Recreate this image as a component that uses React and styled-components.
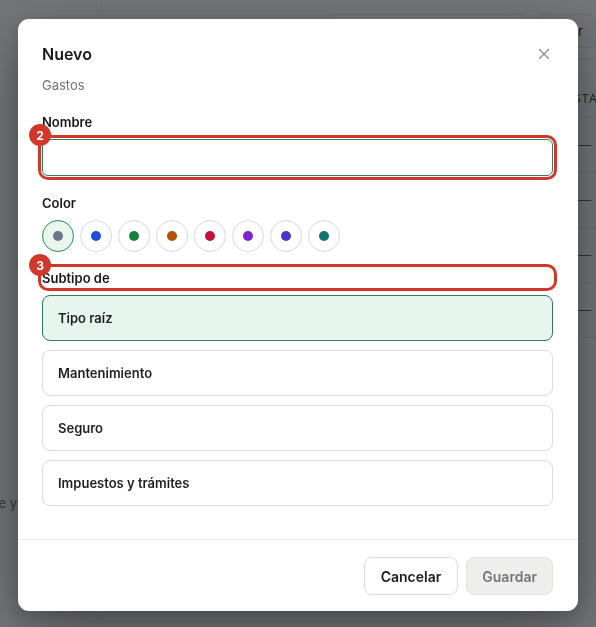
import React from 'react'
import styled, { createGlobalStyle } from 'styled-components'

const GlobalStyle = createGlobalStyle`
  html, body {
    margin: 0;
    padding: 0;
    height: 100%;
    overflow: hidden;
  }
  body {
    font-family: Inter, "Noto Sans", "Liberation Sans", sans-serif;
    background: #f7f8fa;
    color: #1b1d21;
  }
`

const swatches = ['#6b7588', '#1d4ed8', '#15803d', '#b45309', '#be123c', '#7e22ce', '#4338ca', '#0f766e']
const subtypes = ['Tipo raíz', 'Mantenimiento', 'Seguro', 'Impuestos y trámites']

export default function App() {
  return (
    <>
      <GlobalStyle />
      <Page>
        <Sidebar>
          <SideNote>
            <span>Fecha de pago, importe y</span>
          </SideNote>
        </Sidebar>
        <Main>
          <TopBar>
            <PageTitle>Tipos</PageTitle>
            <Search />
            <GhostButton>Crear</GhostButton>
          </TopBar>
          <Table>
            <HeadRow>
              <Cell />
              <HeadCell>Estado</HeadCell>
            </HeadRow>
            {[0, 1, 2, 3].map((i) => (
              <Row key={i}>
                <Cell />
                <DashCell>—</DashCell>
              </Row>
            ))}
          </Table>
        </Main>
      </Page>

      <Overlay />
      <Dialog>
        <Header>
          <Title>Nuevo</Title>
          <Close aria-label="Cerrar">
            <svg width="12" height="12" viewBox="0 0 12 12" fill="none">
              <path d="M1.5 1.5l9 9M10.5 1.5l-9 9" stroke="#8a8d92" strokeWidth="1.4" strokeLinecap="round" />
            </svg>
          </Close>
        </Header>
        <Subtitle>Gastos</Subtitle>

        <Body>
          <Field>
            <Label>Nombre</Label>
            <Marked>
              <Badge>2</Badge>
              <Input />
            </Marked>
          </Field>

          <Field>
            <Label>Color</Label>
            <Swatches>
              {swatches.map((c, i) => (
                <Swatch key={c} $selected={i === 0}>
                  <Dot style={{ background: c }} />
                </Swatch>
              ))}
            </Swatches>
          </Field>

          <Field $tight>
            <Marked>
              <Badge $top={-14}>3</Badge>
              <Label $boxed>Subtipo de</Label>
            </Marked>
            <Options>
              {subtypes.map((s, i) => (
                <Option key={s} $active={i === 0}>{s}</Option>
              ))}
            </Options>
          </Field>
        </Body>

        <Footer>
          <Button>Cancelar</Button>
          <Button $disabled>Guardar</Button>
        </Footer>
      </Dialog>
    </>
  )
}

/* page underneath the dialog */

const Page = styled.div`
  display: flex;
  height: 100vh;
`

const Sidebar = styled.aside`
  width: 102px;
  flex-shrink: 0;
  border-right: 1px solid #e2e4e8;
  display: flex;
  flex-direction: column;
  justify-content: flex-end;
  padding-bottom: 116px;
  box-sizing: border-box;
`

const SideNote = styled.div`
  width: 17px;
  display: flex;
  justify-content: flex-end;
  overflow: hidden;
  white-space: nowrap;
  font-size: 13px;
  color: #6f737a;
`

const Main = styled.main`
  flex: 1;
  display: flex;
  flex-direction: column;
  padding-left: 30px;
  min-width: 0;
`

const TopBar = styled.div`
  display: flex;
  align-items: flex-start;
  height: 60px;
  padding-top: 14px;
  box-sizing: border-box;
  border-bottom: 1px solid #e4e6ea;
`

const PageTitle = styled.h1`
  margin: 2px 0 0;
  font-size: 18px;
  font-weight: 600;
  flex: 1;
`

const Search = styled.div`
  width: 196px;
  height: 32px;
  border: 1px solid #dcdfe4;
  border-radius: 8px;
  background: #fff;
`

const GhostButton = styled.div`
  margin-left: 10px;
  height: 32px;
  padding: 0 12px;
  display: flex;
  align-items: center;
  border: 1px solid #dcdfe4;
  border-radius: 8px;
  font-size: 13px;
  background: #f2f3f5;
  white-space: nowrap;
`

const Table = styled.div`
  display: flex;
  flex-direction: column;
  margin-top: 20px;
`

const HeadRow = styled.div`
  display: flex;
  align-items: center;
  height: 37px;
  border-bottom: 1px solid #e1e3e7;
`

const Row = styled.div`
  display: flex;
  align-items: center;
  height: 54px;
  border-bottom: 1px solid #e1e3e7;
`

const Cell = styled.div`
  width: 433px;
  flex-shrink: 0;
`

const HeadCell = styled.div`
  font-size: 12px;
  letter-spacing: 0.06em;
  text-transform: uppercase;
  color: #3b3f46;
  white-space: nowrap;
`

const DashCell = styled.div`
  padding-left: 13px;
  font-size: 13px;
  color: #5b6068;
`

/* modal */

const Overlay = styled.div`
  position: fixed;
  inset: 0;
  background: rgba(16, 19, 23, 0.57);
`

const Dialog = styled.div`
  position: fixed;
  left: 18px;
  top: 19px;
  width: 560px;
  background: #fff;
  border-radius: 11px;
  box-shadow: 0 20px 60px rgba(0, 0, 0, 0.35), 0 4px 14px rgba(0, 0, 0, 0.15);
  display: flex;
  flex-direction: column;
`

const Header = styled.div`
  display: flex;
  align-items: center;
  justify-content: space-between;
  padding: 24px 26px 0 24px;
`

const Title = styled.h2`
  margin: 0;
  font-size: 16px;
  line-height: 22px;
  font-weight: 600;
  color: #17191c;
`

const Close = styled.button`
  border: 0;
  background: none;
  padding: 0;
  width: 16px;
  height: 16px;
  display: flex;
  align-items: center;
  justify-content: center;
`

const Subtitle = styled.p`
  margin: 11px 24px 0;
  font-size: 13px;
  line-height: 18px;
  color: #70747a;
`

const Body = styled.div`
  display: flex;
  flex-direction: column;
  gap: 19px;
  padding: 20px 25px 33px 24px;
  border-bottom: 1px solid #e8e9eb;
`

const Field = styled.div`
  display: flex;
  flex-direction: column;
  gap: ${(p) => (p.$tight ? '8px' : '9px')};
  margin-top: ${(p) => (p.$tight ? '-3px' : '0')};
`

const Label = styled.div`
  font-size: 13px;
  line-height: 16px;
  font-weight: 600;
  color: #16181b;
  ${(p) => p.$boxed && 'padding: 2px 0 1px;'}
`

const Marked = styled.div`
  position: relative;
  outline: 3px solid #d1382b;
  outline-offset: 1px;
  border-radius: 6px;
`

const Badge = styled.span`
  position: absolute;
  left: -13px;
  top: ${(p) => (p.$top ?? -15)}px;
  width: 22px;
  height: 22px;
  border-radius: 50%;
  background: #d1382b;
  color: #fff;
  font-size: 12px;
  font-weight: 700;
  display: flex;
  align-items: center;
  justify-content: center;
  z-index: 1;
`

const Input = styled.input`
  display: block;
  box-sizing: border-box;
  width: 100%;
  height: 37px;
  border: 1px solid #2e7d5b;
  border-radius: 6px;
  background: #fff;
  outline: none;
`

const Swatches = styled.div`
  display: flex;
  gap: 6px;
`

const Swatch = styled.div`
  width: 32px;
  height: 32px;
  box-sizing: border-box;
  border-radius: 50%;
  border: 1px solid ${(p) => (p.$selected ? '#2f8a60' : '#d8d9dc')};
  background: ${(p) => (p.$selected ? '#e8f6ee' : '#fff')};
  display: flex;
  align-items: center;
  justify-content: center;
`

const Dot = styled.span`
  width: 10px;
  height: 10px;
  border-radius: 50%;
`

const Options = styled.div`
  display: flex;
  flex-direction: column;
  gap: 9px;
`

const Option = styled.div`
  box-sizing: border-box;
  height: 46px;
  padding: 0 15px;
  display: flex;
  align-items: center;
  border-radius: 8px;
  border: 1px solid ${(p) => (p.$active ? '#2f7d5d' : '#dadbde')};
  background: ${(p) => (p.$active ? '#e6f6ee' : '#fff')};
  font-size: 13px;
  font-weight: 600;
  color: #1d1f23;
`

const Footer = styled.div`
  display: flex;
  justify-content: flex-end;
  gap: 8px;
  padding: 17px 25px 16px;
`

const Button = styled.button`
  height: 38px;
  padding: 0 ${(p) => (p.$disabled ? '15px' : '16px')};
  border-radius: 8px;
  font-family: inherit;
  font-size: 14px;
  font-weight: 600;
  border: 1px solid ${(p) => (p.$disabled ? '#e1e1df' : '#d9dadc')};
  background: ${(p) => (p.$disabled ? '#eeeeec' : '#fff')};
  color: ${(p) => (p.$disabled ? '#72767b' : '#1a1c1f')};
`
